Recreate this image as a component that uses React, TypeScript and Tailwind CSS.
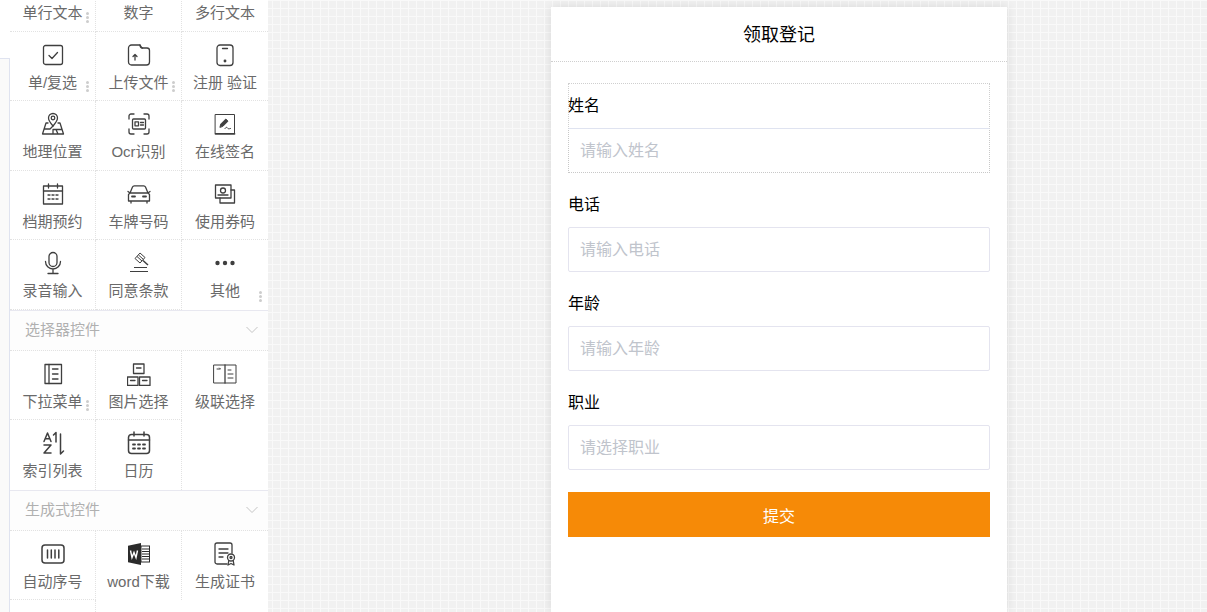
import React from "react";

const S = "#3f3f3f";
const P = ({ children }: { children: React.ReactNode }) => (
  <svg width={24} height={24} viewBox="0 0 24 24" fill="none" stroke={S} strokeWidth={1.3} strokeLinecap="round" strokeLinejoin="round">
    {children}
  </svg>
);

const icons: Record<string, React.ReactNode> = {
  check: <P><rect x="2.5" y="2.5" width="19" height="19" rx="2" /><path d="M8 12.5l3 3 5.5-6" /></P>,
  upload: <P><path d="M1.5 5a3 3 0 0 1 3-3h8.5l2 3h5a2.5 2.5 0 0 1 2.5 2.500v11.500a3 3 0 0 1-3 3h-15a3 3 0 0 1-3-3z" /><path d="M13 2c0 2 1 3 2.500 3M8 17v-5.500M6 13.500l2-2 2 2" /></P>,
  phone: <P><rect x="4" y="2" width="16" height="20.500" rx="3" /><path d="M9.500 5.500h5" /><circle cx="12" cy="18" r="0.800" fill={S} /></P>,
  map: <P><path d="M12 14c-3-3.500-4.500-5.500-4.500-8a4.500 4.500 0 0 1 9 0c0 2.500-1.500 4.500-4.500 8z" /><circle cx="12" cy="6" r="1.800" /><path d="M7 11H5L1.500 22h21L19 11h-2M3.500 17H9l3-3M12 22v-4.500h3l2 4.500M15 17.500h6" /></P>,
  ocr: <P><path d="M2 7V4a2 2 0 0 1 2-2h3M17 2h3a2 2 0 0 1 2 2v3M2 17v3a2 2 0 0 0 2 2h3M17 22h3a2 2 0 0 0 2-2v-3" /><rect x="5.500" y="7" width="13" height="10" rx="1" /><rect x="8" y="9.800" width="3.500" height="4" /><path d="M13.500 10.500h3M13.500 13h3" /></P>,
  sign: <svg width={24} height={24} viewBox="0 0 24 24" fill="none" stroke={S} strokeLinecap="round" strokeLinejoin="round"><rect x="2.500" y="2.500" width="19" height="19" strokeWidth="1" /><path d="M2.500 21.800h19" strokeWidth="1.800" /><path d="M7 15l.800-3 5-5 2.200 2.200-5 5z" fill={S} strokeWidth="1" /><path d="M12 16.500c1-1.500 2-1.500 2.500-.500s1.500 1 3 .500" strokeWidth="1" /></svg>,
  cal: <P><rect x="2.500" y="4" width="19" height="18" /><path d="M2.500 9h19M7.500 2v4M16.500 2v4" /><path d="M7 13h2M11 13h2M15 13h2M7 17h2M11 17h2M15 17h2" strokeDasharray="1 0.800" /></P>,
  car: <P><path d="M3 11l2.500-6a2 2 0 0 1 2-1.200h9a2 2 0 0 1 2 1.200L21 11l1.500 1.500V19h-21v-6.500zM3 11h18M1 9.500l2 1.500M23 9.500l-2 1.500M4 19v2M20 19v2" /><path d="M5 14.500h3M16 14.500h3" strokeWidth="1.800" /></P>,
  coupon: <P><rect x="2.500" y="3" width="15.500" height="13" /><circle cx="10" cy="8.500" r="2.500" /><path d="M18 8h3.500v13H7v-5" /><path d="M5 13h10" /></P>,
  mic: <P><rect x="8" y="1.500" width="8" height="14" rx="4" /><path d="M4.500 10.500a7.500 7.500 0 0 0 15 0M12 18v4M7 22.500h10" /></P>,
  gavel: <svg width={24} height={24} viewBox="0 0 24 24" fill="none" stroke={S} strokeWidth={1} strokeLinejoin="round"><path d="M8 7.500l5-5.500 5 4.500-5 5.500zM10 5.500l5 4.500M11.500 4l5 4.500" /><path d="M16 9.500l5 4.500" strokeWidth="1.500" /><path d="M7 16.500h13M3 20.500h18" strokeWidth="1.200" /></svg>,
  more: <svg width={24} height={24} viewBox="0 0 24 24" fill={S}><circle cx="4.500" cy="12" r="2.200" /><circle cx="12" cy="12" r="2.200" /><circle cx="19.500" cy="12" r="2.200" /></svg>,
  list: <P><rect x="4" y="2.500" width="16.500" height="19" /><path d="M8 2.500v19" /><path d="M11.500 7h5.500M11.500 12h5.500M11.500 17h5.500" /></P>,
  tree: <P><rect x="6.500" y="2" width="10.500" height="9.500" /><rect x="0.500" y="15" width="10.500" height="8.500" /><rect x="12.500" y="15" width="10.500" height="8.500" /><path d="M9.500 6h4.500M3.500 18.500h4.500M15.500 18.500h4.500" /></P>,
  cascade: <P><rect x="1" y="3" width="22" height="18" strokeWidth="1" /><path d="M12 3v18" /><path d="M4 7h3.500l-1-1M15 8h3M15 12h5M15 16h5" strokeWidth="1" /></P>,
  sort: <svg width={24} height={24} viewBox="0 0 24 24" fill="none" stroke={S} strokeWidth={1.500} strokeLinecap="round" strokeLinejoin="round"><path d="M3 10.500l3.500-8.500 3.500 8.500M4.200 7.800h4.600M3 14h7l-7 8h7M15 11V1.500l-2.500 2.500M19.500 3v20l3-3" /></svg>,
  cal2: <svg width={24} height={24} viewBox="0 0 24 24" fill="none" stroke={S} strokeWidth={1.500} strokeLinecap="round"><rect x="1.500" y="3.500" width="21" height="19" rx="3" /><path d="M1.500 9h21M7 1v4M17 1v4" /><path d="M6 13.500h2M11 13.500h2M16 13.500h2M6 17.500h2M11 17.500h2M16 17.500h2" strokeWidth="1.800" /></svg>,
  seq: <P><rect x="1" y="3" width="22" height="18" rx="3" strokeWidth="1.500" /><path d="M6.500 8v8M10.300 8v8M14 8v8M17.800 8v8" strokeWidth="1.500" /></P>,
  word: <svg width={24} height={24} viewBox="0 0 24 24"><path d="M1 3.800L14 1v22L1 20.200z" fill="#2b2b2b" /><rect x="14" y="4" width="8.500" height="16" fill="#fff" stroke="#2b2b2b" /><path d="M15 7h7M15 9.500h7M15 12h7M15 14.500h7M15 17h7" stroke="#2b2b2b" strokeWidth="1.200" /><path d="M3.500 8.500l1.500 7 2-5 2 5 1.500-7" fill="none" stroke="#fff" strokeWidth="1.400" /></svg>,
  cert: <P><path d="M14 22H4a2 2 0 0 1-2-2V3a2 2 0 0 1 2-2h13a2 2 0 0 1 2 2v8" /><path d="M6 7h9M6 11h9M6 15h4" /><circle cx="18" cy="15.500" r="3.500" /><circle cx="18" cy="15.500" r="1" /><path d="M15.800 18.500L15 23l3-1.500 3 1.500-.8-4.500" /></P>,
};

const Dots = ({ cls }: { cls: string }) => (
  <span className={"absolute flex flex-col gap-[1px] " + cls}>
    <i className="w-[3px] h-[3px] rounded-full bg-[#cdcdcd]" />
    <i className="w-[3px] h-[3px] rounded-full bg-[#cdcdcd]" />
    <i className="w-[3px] h-[3px] rounded-full bg-[#cdcdcd]" />
  </span>
);

type Item = { t: string; i?: string; d?: boolean; noB?: boolean; noR?: boolean };

const Cell = ({ t, i, d, noB, noR }: Item) => (
  <div className={"relative h-[69.5px] border-dotted border-[#e2e2e2] flex flex-col items-center pt-[11px] " + (noR ? "" : "border-r ") + (noB ? "" : "border-b")}>
    <div className="h-[24px] flex items-center justify-center">{i ? icons[i] : null}</div>
    <div className="mt-[6px] text-[15px] leading-[20px] text-[#6a6a6a] whitespace-nowrap">{t}</div>
    {d ? <Dots cls="right-[6px] bottom-[8px]" /> : null}
  </div>
);

const Grid = ({ items }: { items: Item[] }) => (
  <div className="grid grid-cols-[86px_86px_86px] items-start">
    {items.map((c, k) => <Cell key={k} {...c} noR={c.noR ?? k % 3 === 2} />)}
  </div>
);

const Section = ({ t }: { t: string }) => (
  <div className="h-[41px] border-t border-b border-[#e8e8f0] [border-bottom-style:dotted] [border-bottom-color:#e2e2e2] flex items-center justify-between pl-[15px] pr-[9px] bg-[#fdfdfd]">
    <span className="text-[15px] text-[#b0b0b0]">{t}</span>
    <svg width="14" height="8" viewBox="0 0 14 8" fill="none" stroke="#c4c4c4" strokeWidth="1"><path d="M1.500 1l5.500 5.500L12.500 1" /></svg>
  </div>
);

const Field = ({ label, ph, first }: { label: string; ph: string; first?: boolean }) => (
  <div className={first ? "h-[90px] border-t border-x border-dotted border-[#cfcfcf] flex flex-col justify-end" : "h-[90px] mt-[9px] flex flex-col justify-end"}>
    <div className={"text-[16px] leading-[22px] text-black h-[33px] " + (first ? "-ml-px" : "")}>{label}</div>
    <div className={"h-[45px] bg-white flex items-center text-[16px] text-[#c0c4cc] border " + (first ? "-mx-px pl-[11px] border-dotted border-[#c8c8c8] [border-top-style:solid] [border-top-color:#dfe3f0]" : "pl-[11px] rounded-[2px] border-[#e4e4ef]")}>{ph}</div>
  </div>
);

export default function App() {
  return (
    <div
      className="h-[612px] w-[1207px] overflow-hidden flex bg-[#f1f1f1] bg-[linear-gradient(#f9f9f9_1px,transparent_1px),linear-gradient(90deg,#f9f9f9_1px,transparent_1px)] bg-[size:8px_8px]"
      style={{ fontFamily: '"Liberation Sans", "Noto Sans CJK SC", sans-serif' }}
    >
      <div className="w-[10px] shrink-0 bg-white flex flex-col">
        <div className="h-[58px]" />
        <div className="flex-1 bg-[#fafafa] border-t border-r border-[#dfe3f0]" />
      </div>
      <aside className="w-[258px] shrink-0 bg-white -mt-[38px] h-[700px]">
        <Grid items={[
          { t: "单行文本", d: true }, { t: "数字" }, { t: "多行文本" },
          { t: "单/复选", i: "check", d: true }, { t: "上传文件", i: "upload", d: true }, { t: "注册 验证", i: "phone" },
          { t: "地理位置", i: "map" }, { t: "Ocr识别", i: "ocr" }, { t: "在线签名", i: "sign" },
          { t: "档期预约", i: "cal" }, { t: "车牌号码", i: "car" }, { t: "使用券码", i: "coupon" },
          { t: "录音输入", i: "mic" }, { t: "同意条款", i: "gavel" }, { t: "其他", i: "more", d: true, noB: true },
        ]} />
        <Section t="选择器控件" />
        <Grid items={[
          { t: "下拉菜单", i: "list", d: true }, { t: "图片选择", i: "tree" }, { t: "级联选择", i: "cascade", noB: true },
          { t: "索引列表", i: "sort", noB: true }, { t: "日历", i: "cal2", noB: true },
        ]} />
        <Section t="生成式控件" />
        <Grid items={[
          { t: "自动序号", i: "seq" }, { t: "word下载", i: "word", noB: true }, { t: "生成证书", i: "cert", noB: true },
          { t: "", noB: true },
        ]} />
      </aside>
      <main className="w-[456px] shrink-0 ml-[283px] mt-[7px] bg-white shadow-[0_0_10px_rgba(0,0,0,0.1)] flex flex-col">
        <header className="h-[55px] pt-[2px] border-b border-dotted border-[#cfcfcf] flex items-center justify-center text-[18px] text-black">领取登记</header>
        <div className="px-[17px] pt-[21px]">
          <Field label="姓名" ph="请输入姓名" first />
          <Field label="电话" ph="请输入电话" />
          <Field label="年龄" ph="请输入年龄" />
          <Field label="职业" ph="请选择职业" />
          <button className="mt-[22px] w-full h-[45px] pt-[4px] bg-[#f68a07] text-white text-[16px]">提交</button>
        </div>
      </main>
    </div>
  );
}
